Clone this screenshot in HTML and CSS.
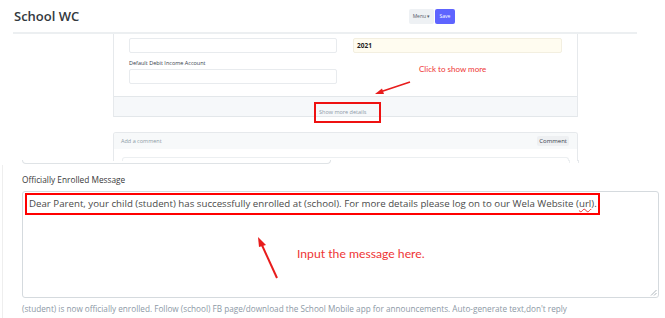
FILE: index.html
```html
<!DOCTYPE html>
<html>
<head>
    <meta charset='utf-8'>
    <title>School WC</title>
    <meta name='viewport' content='width=device-width, initial-scale=1'>
    <link rel="stylesheet" href="styles.css">
</head>
<body>
<div class="page">

    <!-- top screenshot: the form -->
    <div class="topbar">
        <div class="title">School WC</div>
        <div class="actions">
            <span class="btn btn-menu">Menu &#9662;</span>
            <span class="btn btn-save">Save</span>
        </div>
    </div>

    <div class="layout">
        <div class="sidebar"></div>
        <div class="main">
            <div class="form-panel">
                <div class="form-grid">
                    <div class="col">
                        <div class="control"></div>
                        <div class="small-label">Default Debit Income Account</div>
                        <div class="control"></div>
                    </div>
                    <div class="col">
                        <div class="control control-year">2021</div>
                    </div>
                </div>
                <div class="more-bar">
                    <span class="more-link">Show more details</span>
                </div>
            </div>

            <div class="comment-card">
                <div class="comment-head">
                    <span>Add a comment</span>
                    <span class="btn-comment">Comment</span>
                </div>
                <div class="comment-body">
                    <div class="comment-input"></div>
                </div>
            </div>
        </div>
    </div>

    <!-- bottom screenshot: the message field -->
    <div class="seam">
        <div class="seam-box"></div>
        <div class="seam-lines"></div>
    </div>

    <div class="enrolled">
        <div class="field-label">Officially Enrolled Message</div>
        <div class="textarea">
            <div class="message">Dear Parent, your child (student) has successfully enrolled at (school). For more details please log on to our Wela Website (<span class="typo">url</span>).</div>
            <div class="note note-input">Input the message here.</div>
            <svg class="arrow arrow-input" width="30" height="50" viewBox="0 0 30 50">
                <line x1="23" y1="44" x2="7" y2="9" stroke="#e81c1c" stroke-width="2"/>
                <polygon points="4,3 12,11 5,13" fill="#e81c1c"/>
            </svg>
            <svg class="grip" width="7" height="7" viewBox="0 0 7 7">
                <line x1="1" y1="6.5" x2="6.5" y2="1" stroke="#9aa3ab" stroke-width="0.8"/>
                <line x1="4" y1="6.5" x2="6.5" y2="4" stroke="#9aa3ab" stroke-width="0.8"/>
            </svg>
        </div>
        <div class="hint">(student) is now officially enrolled. Follow (school) FB page/download the School Mobile app for announcements. Auto-generate text,don't reply</div>
    </div>

    <!-- annotation over the top screenshot -->
    <div class="note note-click">Click to show more</div>
    <svg class="arrow arrow-click" width="40" height="16" viewBox="0 0 40 16">
        <line x1="36" y1="2" x2="6" y2="12" stroke="#e81c1c" stroke-width="1.6"/>
        <polygon points="1,14 8,8.5 10,14" fill="#e81c1c"/>
    </svg>
</div>
</body>
</html>
```

FILE: styles.css
```css
body {
    margin: 0;
    background-color: #fff;
    font-family: "Open Sans", Arial, sans-serif;
    color: #36414c;
}
.page {
    position: relative;
    width: 665px;
    height: 318px;
    overflow: hidden;
}

/* header */
.topbar {
    display: flex;
    justify-content: space-between;
    align-items: center;
    height: 32px;
    margin-left: 13px;
    width: 624px;
    border-bottom: 2px solid #eceff1;
}
.title {
    padding-left: 1px;
    font-size: 13px;
    font-weight: 600;
    color: #33383d;
}
.actions {
    display: flex;
    gap: 1px;
    margin-right: 182px;
}
.btn {
    height: 15px;
    line-height: 15px;
    font-size: 5px;
    border-radius: 2px;
    text-align: center;
}
.btn-menu {
    width: 25px;
    background-color: #eef1f4;
    color: #56606a;
}
.btn-save {
    width: 20px;
    background-color: #5e64ff;
    color: #fff;
}

/* form */
.layout {
    display: flex;
    height: 126px;
}
.sidebar {
    width: 100px;
    margin-left: 13px;
}
.main {
    width: 465px;
}
.form-panel {
    border-left: 1px solid #e6e9ec;
    border-right: 1px solid #e6e9ec;
}
.form-grid {
    display: grid;
    grid-template-columns: 208px 209px;
    column-gap: 16px;
    padding: 4px 15px 12px 15px;
}
.control {
    height: 13px;
    border: 1px solid #e8ebee;
    border-radius: 2px;
    background-color: #fff;
}
.control-year {
    background-color: #fffcf0;
    border-color: #f3efe0;
    font-size: 6.5px;
    font-weight: 700;
    line-height: 13px;
    padding-left: 3px;
    color: #222;
}
.small-label {
    font-size: 5.5px;
    line-height: 8px;
    margin: 6px 0 2px 0;
    color: #36414c;
}
.more-bar {
    height: 19px;
    background-color: #f6f8fa;
    border-top: 1px solid #e3e7ea;
    border-bottom: 1px solid #e3e7ea;
    text-align: center;
}
.more-link {
    display: inline-block;
    width: 60px;
    height: 17px;
    line-height: 17px;
    margin-left: 4px;
    padding-left: 3px;
    text-align: left;
    font-size: 5.5px;
    color: #8d99a6;
    border: 2px solid #ee1111;
}

/* comment */
.comment-card {
    margin-top: 15px;
    border: 1px solid #e6e9ec;
    border-bottom: none;
    border-radius: 3px 3px 0 0;
    height: 28px;
    overflow: hidden;
}
.comment-head {
    display: flex;
    justify-content: space-between;
    align-items: center;
    height: 16px;
    padding: 0 8px 0 7px;
    background-color: #f7f9fa;
    font-size: 5.5px;
    color: #8d99a6;
}
.btn-comment {
    background-color: #eef0f2;
    color: #36414c;
    font-size: 6px;
    line-height: 10px;
    padding: 0 2px;
    border-radius: 2px;
}
.comment-body {
    padding: 8px 8px 0 8px;
}
.comment-input {
    height: 10px;
    border: 1px solid #eceff1;
    border-bottom: none;
    border-radius: 3px 3px 0 0;
}

/* seam between the two screenshots */
.seam {
    display: flex;
    height: 5px;
}
.seam-box {
    width: 307px;
    height: 3px;
    margin-left: 22px;
    border: 1px solid #dfe3e6;
    border-top: none;
    border-radius: 0 0 4px 4px;
}
.seam-lines {
    width: 8px;
    height: 3px;
    margin-left: 238px;
    border-left: 1px solid #eceff1;
    border-right: 1px solid #e6e9ec;
}

/* message field */
.enrolled {
    margin-left: 2px;
    border-left: 1px solid #eeeeee;
    padding: 9px 0 0 19px;
    height: 200px;
}
.field-label {
    font-size: 8.3px;
    line-height: 11px;
    color: #3a3a3a;
    margin-bottom: 6px;
}
.textarea {
    position: relative;
    width: 635px;
    height: 105px;
    border: 1px solid #d5dade;
    border-radius: 3px;
}
.message {
    width: 569px;
    margin: 1px 0 0 2px;
    padding: 0 0 0 2px;
    height: 18px;
    line-height: 18px;
    border: 2px solid #ff0000;
    font-size: 9.7px;
    color: #4a4a4a;
    white-space: nowrap;
}
.typo {
    text-decoration: underline wavy #e23a3a;
    text-decoration-thickness: 0.8px;
}
.hint {
    margin-top: 5px;
    font-size: 8.2px;
    color: #8d99a6;
    white-space: nowrap;
}
.grip {
    position: absolute;
    right: 1px;
    bottom: 1px;
}

/* annotations */
.note {
    position: absolute;
    font-family: Lato, "Open Sans", sans-serif;
    color: #ee3535;
    white-space: nowrap;
}
.note-input {
    left: 274px;
    top: 54px;
    font-size: 12.2px;
}
.note-click {
    left: 419px;
    top: 64px;
    font-size: 8px;
}
.arrow {
    position: absolute;
}
.arrow-input {
    left: 231px;
    top: 42px;
}
.arrow-click {
    left: 374px;
    top: 80px;
}
```
